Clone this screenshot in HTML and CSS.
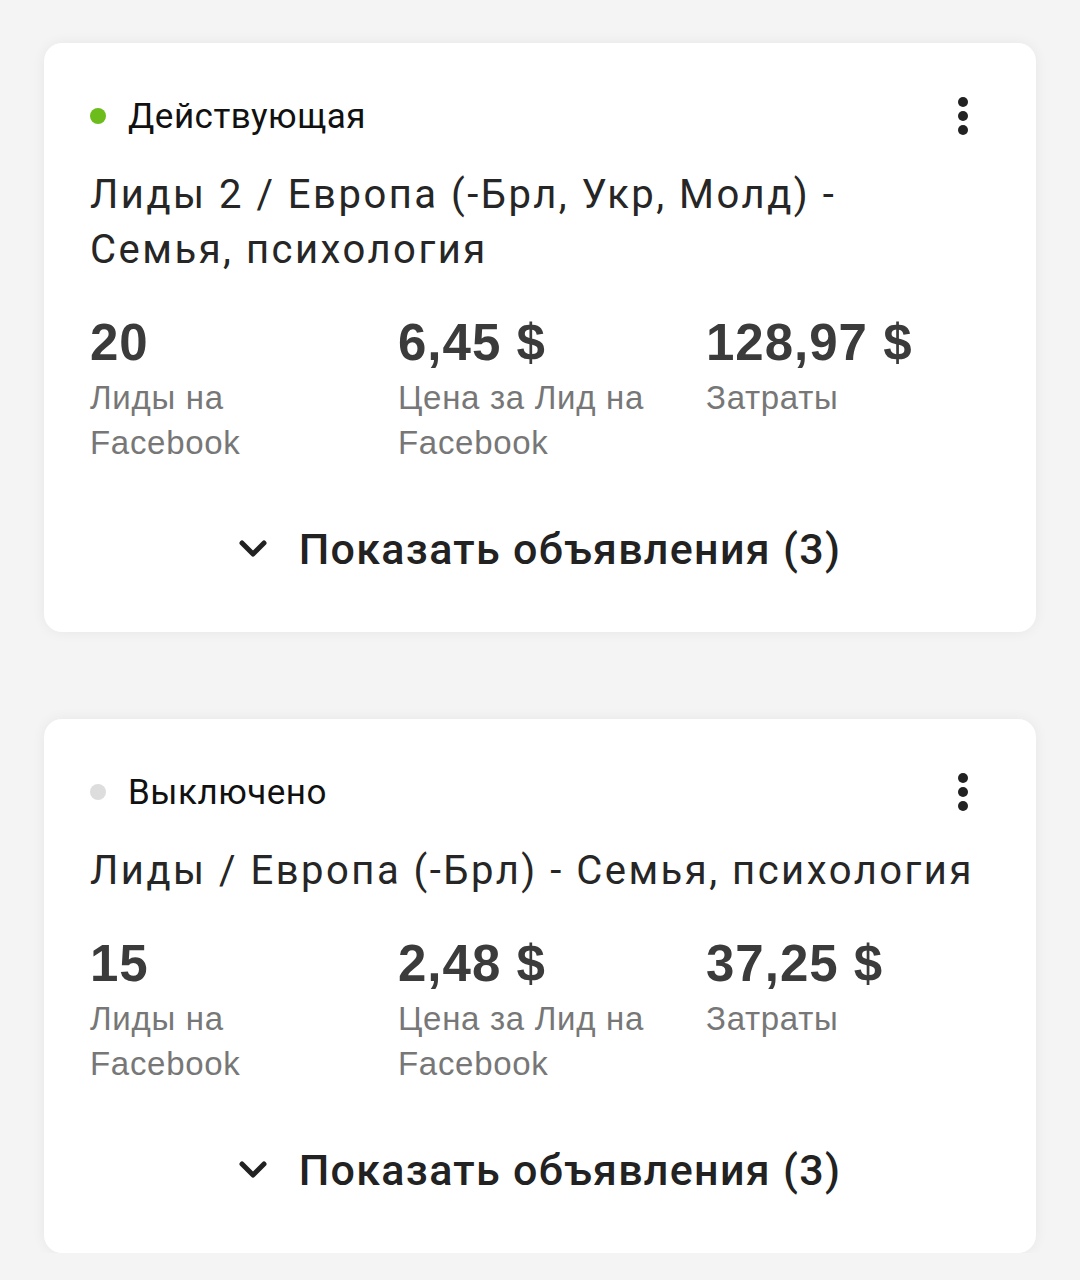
FILE: index.html
```html
<!DOCTYPE html>
<html lang="ru">

<head>
    <meta charset="UTF-8">
    <meta name="viewport" content="width=device-width, initial-scale=1.0">
    <title>Кампании</title>
    <link rel="stylesheet" href="styles.css">
</head>

<body>
    <main class="campaigns">
        <section class="card">
            <div class="card-head">
                <div class="status">
                    <span class="status-dot active"></span>
                    <span>Действующая</span>
                </div>
                <button class="menu-btn" aria-label="Меню">
                    <svg width="12" height="40" viewBox="0 0 12 40">
                        <circle cx="6" cy="6" r="5" />
                        <circle cx="6" cy="20" r="5" />
                        <circle cx="6" cy="34" r="5" />
                    </svg>
                </button>
            </div>
            <h2 class="card-title">Лиды 2 / Европа (-Брл, Укр, Молд) - Семья, психология</h2>
            <div class="stats">
                <div class="stat">
                    <div class="stat-value">20</div>
                    <div class="stat-label">Лиды на Facebook</div>
                </div>
                <div class="stat">
                    <div class="stat-value">6,45 $</div>
                    <div class="stat-label">Цена за Лид на Facebook</div>
                </div>
                <div class="stat">
                    <div class="stat-value">128,97 $</div>
                    <div class="stat-label">Затраты</div>
                </div>
            </div>
            <button class="toggle-ads">
                <svg width="28" height="18" viewBox="0 0 28 18">
                    <polyline points="3,3 14,14 25,3" />
                </svg>
                <span>Показать объявления (3)</span>
            </button>
        </section>

        <section class="card">
            <div class="card-head">
                <div class="status">
                    <span class="status-dot"></span>
                    <span>Выключено</span>
                </div>
                <button class="menu-btn" aria-label="Меню">
                    <svg width="12" height="40" viewBox="0 0 12 40">
                        <circle cx="6" cy="6" r="5" />
                        <circle cx="6" cy="20" r="5" />
                        <circle cx="6" cy="34" r="5" />
                    </svg>
                </button>
            </div>
            <h2 class="card-title">Лиды / Европа (-Брл) - Семья, психология</h2>
            <div class="stats">
                <div class="stat">
                    <div class="stat-value">15</div>
                    <div class="stat-label">Лиды на Facebook</div>
                </div>
                <div class="stat">
                    <div class="stat-value">2,48 $</div>
                    <div class="stat-label">Цена за Лид на Facebook</div>
                </div>
                <div class="stat">
                    <div class="stat-value">37,25 $</div>
                    <div class="stat-label">Затраты</div>
                </div>
            </div>
            <button class="toggle-ads">
                <svg width="28" height="18" viewBox="0 0 28 18">
                    <polyline points="3,3 14,14 25,3" />
                </svg>
                <span>Показать объявления (3)</span>
            </button>
        </section>
    </main>
</body>

</html>
```

FILE: styles.css
```css
body {
    margin: 0;
    padding: 0;
    background-color: #f4f4f4;
    font-family: Roboto, "Noto Sans", sans-serif;
    color: #222;
}

.campaigns {
    display: flex;
    flex-direction: column;
    gap: 87px;
    padding: 43px 44px 0;
}

.card {
    background-color: #fff;
    border-radius: 18px;
    box-shadow: 0 0 14px rgba(0, 0, 0, 0.06);
    padding: 50px 0 53px 46px;
}

.card-head {
    display: flex;
    align-items: center;
    justify-content: space-between;
    height: 46px;
    padding-right: 67px;
}

.status {
    display: flex;
    align-items: center;
    gap: 22px;
    font-size: 35px;
    letter-spacing: 0.5px;
    color: #111;
}

.status-dot {
    width: 16px;
    height: 16px;
    border-radius: 50%;
    background-color: #ddd;
}

.status-dot.active {
    background-color: #6cbd1c;
}

.menu-btn {
    border: none;
    background: none;
    padding: 0;
    cursor: pointer;
    display: flex;
}

.menu-btn svg {
    fill: #222;
}

.card-title {
    margin: 28px 60px 0 0;
    font-size: 40px;
    font-weight: 400;
    line-height: 55px;
    letter-spacing: 2.5px;
    color: #262626;
}

.stats {
    display: grid;
    grid-template-columns: 308px 308px 1fr;
    margin-top: 38px;
    font-family: "Liberation Sans", Arial, sans-serif;
}

.stat-value {
    font-size: 51px;
    font-weight: 700;
    line-height: 56px;
    letter-spacing: 1px;
    color: #3b3b3b;
}

.stat-label {
    margin-top: 4px;
    font-size: 33px;
    line-height: 45px;
    letter-spacing: 0.7px;
    color: #777;
    padding-right: 40px;
}

.toggle-ads {
    display: flex;
    align-items: center;
    justify-content: center;
    gap: 32px;
    margin: 54px 0 0 -46px;
    width: calc(100% + 46px);
    height: 60px;
    padding: 0;
    border: none;
    background: none;
    font-family: Roboto, "Noto Sans", sans-serif;
    font-size: 43px;
    font-weight: 500;
    letter-spacing: 1.3px;
    color: #222;
    cursor: pointer;
}

.toggle-ads svg {
    fill: none;
    stroke: #222;
    stroke-width: 5;
    stroke-linecap: round;
    stroke-linejoin: round;
}
```
